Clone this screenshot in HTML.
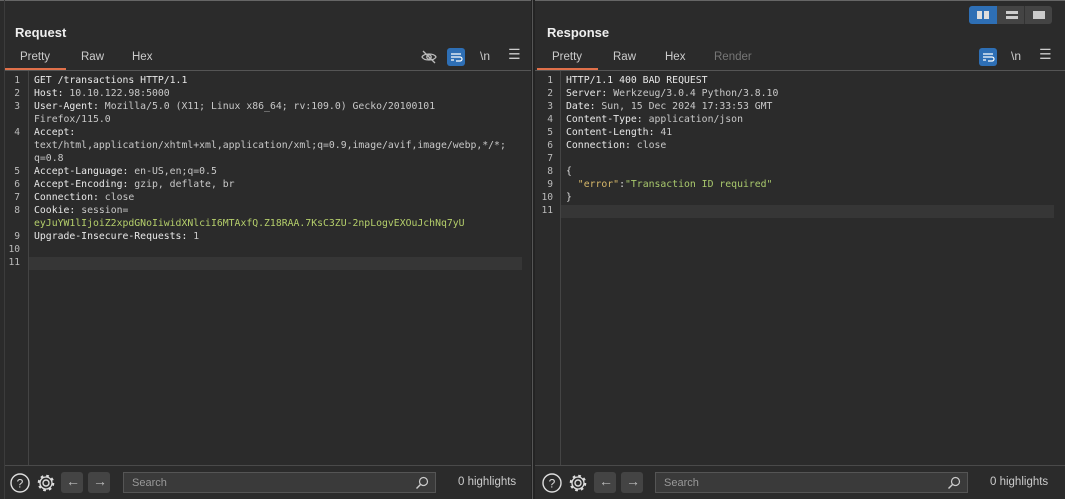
<!DOCTYPE html>
<html><head><style>
*{margin:0;padding:0;box-sizing:border-box}
body{width:1065px;height:499px;background:#2b2b2b;position:relative;overflow:hidden;font-family:"Liberation Sans","DejaVu Sans",sans-serif;color:#ddd}
.abs{position:absolute}
.title{position:absolute;top:25px;font-weight:bold;font-size:13px;color:#eee}
.tab{position:absolute;top:51px;font-size:11.5px;color:#ccc}
.code{position:absolute;font-family:"DejaVu Sans Mono","Liberation Mono",monospace;font-size:9.8px;line-height:13px;color:#ddd;white-space:pre}
.ln{position:absolute;font-family:"DejaVu Sans Mono",monospace;font-size:9.6px;line-height:13px;color:#bbb;text-align:right;white-space:pre}
.k{color:#e8e8e8}.v{color:#c8c8c8}.g{color:#b5cf6b}.y{color:#d7b86a}.s{color:#a9c96d}
.search{position:absolute;top:472px;height:21px;background:#3a3a3a;border:1px solid #555;font-size:11px;color:#999;padding:4px 8px}
.btn{position:absolute;top:472px;width:22px;height:21px;background:#444;border-radius:3px}
</style></head><body>
<div class="abs" style="left:0;top:0;width:1065px;height:1px;background:#666"></div>
<div class="abs" style="left:531px;top:0;width:4px;height:499px;background:#232323"></div>
<div class="abs" style="left:532px;top:0;width:1px;height:499px;background:#555"></div>
<div class="abs" style="left:4px;top:0;width:1px;height:499px;background:#3c3c3c"></div>

<div class="title" style="left:15px">Request</div>
<div class="tab" style="left:20px">Pretty</div>
<div class="tab" style="left:81px">Raw</div>
<div class="tab" style="left:132px">Hex</div>
<div class="abs" style="left:5px;top:70px;width:526px;height:1px;background:#555"></div>
<div class="abs" style="left:5px;top:68px;width:61px;height:2px;background:#e0704a"></div>
<svg class="abs" style="left:420px;top:48px" width="18" height="18" viewBox="0 0 18 18"><path d="M2 9c2-4 12-4 14 0c-2 4-12 4-14 0z" fill="none" stroke="#bbb" stroke-width="1.3"/><circle cx="9" cy="9" r="2.2" fill="none" stroke="#bbb" stroke-width="1.3"/><path d="M3 3l12 12" stroke="#bbb" stroke-width="1.3"/></svg>
<div class="abs" style="left:447px;top:48px;width:18px;height:18px;background:#2e6fb5;border-radius:3px"></div>
<svg class="abs" style="left:447px;top:48px" width="18" height="18"><path d="M4 6h10M4 9h9a2 2 0 0 1 0 4h-4M4 12h3" stroke="#fff" stroke-width="1.2" fill="none"/></svg>
<div class="abs" style="left:480px;top:49px;font-size:12px;color:#ccc">\n</div>
<div class="abs" style="left:508px;top:46px;font-size:14px;color:#ccc">☰</div>
<div class="abs" style="left:28px;top:71px;width:1px;height:394px;background:#444"></div>
<div class="abs" style="left:29px;top:257px;width:493px;height:13px;background:#363636"></div>
<div class="ln" style="left:6px;top:74px;width:14px">1
2
3

4


5
6
7
8

9
10
11</div>
<div class="code" style="left:34px;top:74px"><span class="k">GET /transactions HTTP/1.1</span>
<span class="k">Host:</span> <span class="v">10.10.122.98:5000</span>
<span class="k">User-Agent:</span> <span class="v">Mozilla/5.0 (X11; Linux x86_64; rv:109.0) Gecko/20100101</span>
<span class="v">Firefox/115.0</span>
<span class="k">Accept:</span>
<span class="v">text/html,application/xhtml+xml,application/xml;q=0.9,image/avif,image/webp,*/*;</span>
<span class="v">q=0.8</span>
<span class="k">Accept-Language:</span> <span class="v">en-US,en;q=0.5</span>
<span class="k">Accept-Encoding:</span> <span class="v">gzip, deflate, br</span>
<span class="k">Connection:</span> <span class="v">close</span>
<span class="k">Cookie:</span> <span class="v">session=</span>
<span class="g">eyJuYW1lIjoiZ2xpdGNoIiwidXNlciI6MTAxfQ.Z18RAA.7KsC3ZU-2npLogvEXOuJchNq7yU</span>
<span class="k">Upgrade-Insecure-Requests:</span> <span class="v">1</span></div>
<div class="abs" style="left:5px;top:465px;width:526px;height:1px;background:#4a4a4a"></div>
<svg class="abs" style="left:9px;top:472px" width="22" height="22"><circle cx="11" cy="11" r="9" fill="none" stroke="#ddd" stroke-width="1.4"/><text x="11" y="15.5" font-size="12" fill="#ddd" text-anchor="middle" font-family="Liberation Sans">?</text></svg>
<svg class="abs" style="left:35px;top:472px" width="22" height="22"><circle cx="11" cy="11" r="3" fill="none" stroke="#ddd" stroke-width="1.4"/><circle cx="11" cy="11" r="7" fill="none" stroke="#ddd" stroke-width="2.6" stroke-dasharray="2.6 2.9"/><circle cx="11" cy="11" r="6" fill="none" stroke="#ddd" stroke-width="1.3"/></svg>
<div class="btn" style="left:61px"></div><div class="abs" style="left:66px;top:473px;font-size:14px;color:#bbb">←</div>
<div class="btn" style="left:88px"></div><div class="abs" style="left:93px;top:473px;font-size:14px;color:#bbb">→</div>
<div class="search" style="left:123px;width:313px">Search</div>
<svg class="abs" style="left:414px;top:475px" width="16" height="16"><circle cx="9.5" cy="6.5" r="4" fill="none" stroke="#ccc" stroke-width="1.2"/><path d="M6.5 9.5L2.5 13.5" stroke="#ccc" stroke-width="1.4"/></svg>
<div class="abs" style="left:458px;top:476px;font-size:11.5px;color:#ccc">0 highlights</div>

<div class="abs" style="left:969px;top:6px;width:28px;height:18px;background:#2e6fb5;border-radius:3px 0 0 3px"></div>
<div class="abs" style="left:997px;top:6px;width:55px;height:18px;background:#444;border-radius:0 3px 3px 0"></div>
<div class="abs" style="left:1024px;top:6px;width:1px;height:18px;background:#333"></div>
<div class="abs" style="left:977px;top:11px;width:5px;height:8px;background:#ddd"></div><div class="abs" style="left:984px;top:11px;width:5px;height:8px;background:#ddd"></div>
<div class="abs" style="left:1006px;top:11px;width:12px;height:3px;background:#ccc"></div><div class="abs" style="left:1006px;top:16px;width:12px;height:3px;background:#ccc"></div>
<div class="abs" style="left:1033px;top:11px;width:12px;height:8px;background:#ccc"></div>
<div class="title" style="left:547px">Response</div>
<div class="tab" style="left:552px">Pretty</div>
<div class="tab" style="left:613px">Raw</div>
<div class="tab" style="left:665px">Hex</div>
<div class="tab" style="left:714px;color:#777">Render</div>
<div class="abs" style="left:535px;top:70px;width:530px;height:1px;background:#555"></div>
<div class="abs" style="left:537px;top:68px;width:61px;height:2px;background:#e0704a"></div>
<div class="abs" style="left:979px;top:48px;width:18px;height:18px;background:#2e6fb5;border-radius:3px"></div>
<svg class="abs" style="left:979px;top:48px" width="18" height="18"><path d="M4 6h10M4 9h9a2 2 0 0 1 0 4h-4M4 12h3" stroke="#fff" stroke-width="1.2" fill="none"/></svg>
<div class="abs" style="left:1011px;top:49px;font-size:12px;color:#ccc">\n</div>
<div class="abs" style="left:1039px;top:46px;font-size:14px;color:#ccc">☰</div>
<div class="abs" style="left:560px;top:71px;width:1px;height:394px;background:#444"></div>
<div class="abs" style="left:561px;top:205px;width:493px;height:13px;background:#363636"></div>
<div class="ln" style="left:535px;top:74px;width:18px">1
2
3
4
5
6
7
8
9
10
11</div>
<div class="code" style="left:566px;top:74px"><span class="k">HTTP/1.1 400 BAD REQUEST</span>
<span class="k">Server:</span> <span class="v">Werkzeug/3.0.4 Python/3.8.10</span>
<span class="k">Date:</span> <span class="v">Sun, 15 Dec 2024 17:33:53 GMT</span>
<span class="k">Content-Type:</span> <span class="v">application/json</span>
<span class="k">Content-Length:</span> <span class="v">41</span>
<span class="k">Connection:</span> <span class="v">close</span>

{
  <span class="y">"error"</span>:<span class="s">"Transaction ID required"</span>
}</div>
<div class="abs" style="left:535px;top:465px;width:530px;height:1px;background:#4a4a4a"></div>
<svg class="abs" style="left:541px;top:472px" width="22" height="22"><circle cx="11" cy="11" r="9" fill="none" stroke="#ddd" stroke-width="1.4"/><text x="11" y="15.5" font-size="12" fill="#ddd" text-anchor="middle" font-family="Liberation Sans">?</text></svg>
<svg class="abs" style="left:567px;top:472px" width="22" height="22"><circle cx="11" cy="11" r="3" fill="none" stroke="#ddd" stroke-width="1.4"/><circle cx="11" cy="11" r="7" fill="none" stroke="#ddd" stroke-width="2.6" stroke-dasharray="2.6 2.9"/><circle cx="11" cy="11" r="6" fill="none" stroke="#ddd" stroke-width="1.3"/></svg>
<div class="btn" style="left:594px"></div><div class="abs" style="left:599px;top:473px;font-size:14px;color:#bbb">←</div>
<div class="btn" style="left:621px"></div><div class="abs" style="left:626px;top:473px;font-size:14px;color:#bbb">→</div>
<div class="search" style="left:655px;width:313px">Search</div>
<svg class="abs" style="left:946px;top:475px" width="16" height="16"><circle cx="9.5" cy="6.5" r="4" fill="none" stroke="#ccc" stroke-width="1.2"/><path d="M6.5 9.5L2.5 13.5" stroke="#ccc" stroke-width="1.4"/></svg>
<div class="abs" style="left:990px;top:476px;font-size:11.5px;color:#ccc">0 highlights</div>
</body></html>
